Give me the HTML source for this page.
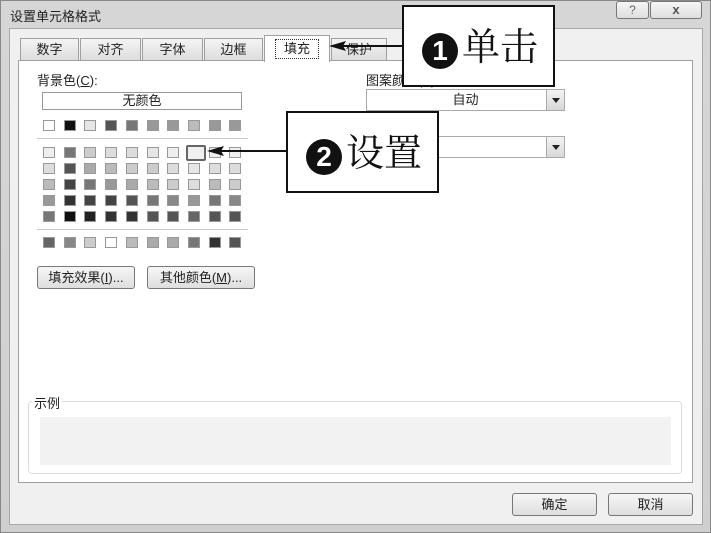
<!DOCTYPE html>
<html><head><meta charset="utf-8"><style>
*{margin:0;padding:0;box-sizing:border-box}
body{width:711px;height:533px;overflow:hidden;background:#c9c9c9;font-family:"Liberation Sans","Noto Sans CJK SC",sans-serif;font-size:12px;color:#222;position:relative}
.a{position:absolute}
.frame{left:0;top:0;width:711px;height:533px;background:linear-gradient(#d6d6d6,#cfcfcf);border:1px solid #888}
.client{left:9px;top:28px;width:694px;height:497px;background:#f0f0f0;border:1px solid #a8a8a8}
.tab{top:38px;height:23px;background:linear-gradient(#f4f4f4,#dcdcdc);border:1px solid #a0a0a0;border-bottom:none;text-align:center;line-height:22px;font-size:13px}
.panel{left:18px;top:60px;width:675px;height:423px;background:#fff;border:1px solid #a0a0a0}
.sw{width:12px;height:11px;border:1px solid #999}
.btn{background:linear-gradient(#f6f6f6,#dedede);border:1px solid #777;border-radius:3px;text-align:center;font-size:13px}
.combo{background:#fff;border:1px solid #aaa;text-align:center;font-size:13px;line-height:20px}
.dd{position:absolute;right:0;top:0;width:18px;height:20px;background:linear-gradient(#f4f4f4,#d8d8d8);border-left:1px solid #aaa}
.dd:after{content:"";position:absolute;left:5px;top:8px;border:4px solid transparent;border-top:5px solid #222}
.call{background:#fff;border:2px solid #111;font-family:"Liberation Serif","Noto Serif CJK SC",serif;font-size:38px;color:#111}
.num{display:inline-block;width:36px;height:36px;border-radius:50%;background:#111;color:#fff;font-family:"Liberation Sans",sans-serif;font-weight:bold;font-size:28px;line-height:36px;text-align:center;vertical-align:middle;margin-right:4px}
</style></head><body>
<div class="a frame"></div>
<div class="a" style="left:10px;top:6px;font-size:13px">设置单元格格式</div>
<div class="a btn" style="left:616px;top:1px;width:33px;height:18px;border-radius:3px;font-size:12px;line-height:16px;color:#666">?</div>
<div class="a btn" style="left:650px;top:1px;width:52px;height:18px;border-radius:3px;font-size:13px;line-height:16px;color:#555;font-weight:bold">x</div>
<div class="a client"></div>
<div class="a tab" style="left:20px;width:59px">数字</div>
<div class="a tab" style="left:80px;width:61px">对齐</div>
<div class="a tab" style="left:142px;width:61px">字体</div>
<div class="a tab" style="left:204px;width:59px">边框</div>
<div class="a tab" style="left:331px;width:56px">保护</div>
<div class="a panel"></div>
<div class="a tab" style="left:264px;top:35px;height:27px;width:66px;background:#fff;z-index:2"><span style="border:1px dotted #333;padding:0 8px;display:inline-block;line-height:18px;margin-top:3px">填充</span></div>
<div class="a" style="left:37px;top:70px;font-size:13px">背景色(<u>C</u>):</div>
<div class="a" style="left:42px;top:92px;width:200px;height:18px;border:1px solid #999;text-align:center;font-size:13px;line-height:16px">无颜色</div>
<div id="sw"></div>
<div class="a" style="left:37px;top:138px;width:211px;height:1px;background:#ccc"></div>
<div class="a" style="left:37px;top:229px;width:211px;height:1px;background:#ccc"></div>
<div class="a btn" style="left:37px;top:266px;width:98px;height:23px;line-height:21px">填充效果(<u>I</u>)...</div>
<div class="a btn" style="left:147px;top:266px;width:108px;height:23px;line-height:21px">其他颜色(<u>M</u>)...</div>
<div class="a" style="left:366px;top:70px;font-size:13px">图案颜色(<u>A</u>):</div>
<div class="a combo" style="left:366px;top:89px;width:199px;height:22px">自动<div class="dd"></div></div>
<div class="a" style="left:366px;top:117px;font-size:13px">图案样式(<u>P</u>):</div>
<div class="a combo" style="left:366px;top:136px;width:199px;height:22px"><div class="dd"></div></div>
<div class="a" style="left:28px;top:401px;width:654px;height:73px;border:1px solid #ddd;border-radius:4px"></div>
<div class="a" style="left:32px;top:393px;background:#fff;padding:0 2px;font-size:13px">示例</div>
<div class="a" style="left:40px;top:417px;width:631px;height:48px;background:#f2f2f2"></div>
<div class="a btn" style="left:512px;top:493px;width:85px;height:23px;line-height:21px">确定</div>
<div class="a btn" style="left:608px;top:493px;width:85px;height:23px;line-height:21px">取消</div>
<div class="a" style="left:186px;top:145px;width:20px;height:16px;border:2px solid #666;border-radius:2px;background:#f0f0f0;z-index:3"></div>
<!-- arrows -->
<svg class="a" style="left:0;top:0;z-index:4" width="711" height="533">
<line x1="340" y1="46" x2="402" y2="46" stroke="#111" stroke-width="2"/>
<polygon points="329,46 346,41 343,46 346,51" fill="#111"/>
<line x1="218" y1="151" x2="286" y2="151" stroke="#111" stroke-width="2"/>
<polygon points="207,151 224,146 221,151 224,156" fill="#111"/>
</svg>
<div class="a call" style="left:402px;top:5px;width:153px;height:82px;z-index:5;padding:20px 0 0 18px;line-height:42px"><span class="num">1</span>单击</div>
<div class="a call" style="left:286px;top:111px;width:153px;height:82px;z-index:5;padding:20px 0 0 18px;line-height:42px"><span class="num">2</span>设置</div>
<script>
var rows=[
[120,["#fff","#111","#e6e6e6","#555","#777","#999","#999","#bbb","#999","#999"]],
[147,["#eee","#777","#ccc","#ddd","#ddd","#e6e6e6","#eee","#f2f2f2","#eee","#eee"]],
[163,["#ddd","#555","#aaa","#bbb","#ccc","#ccc","#ddd","#e6e6e6","#ddd","#ddd"]],
[179,["#bbb","#444","#777","#999","#aaa","#bbb","#ccc","#ddd","#bbb","#ccc"]],
[195,["#999","#333","#444","#444","#555","#777","#888","#999","#777","#888"]],
[211,["#777","#111","#222","#333","#333","#555","#555","#666","#555","#555"]],
[237,["#666","#888","#ccc","#fff","#bbb","#aaa","#aaa","#777","#333","#555"]]];
var h="";
rows.forEach(function(r){r[1].forEach(function(c,i){h+='<div class="a sw" style="left:'+(43+i*20.7)+'px;top:'+r[0]+'px;background:'+c+'"></div>';});});
document.getElementById("sw").innerHTML=h;
</script>
</body></html>
